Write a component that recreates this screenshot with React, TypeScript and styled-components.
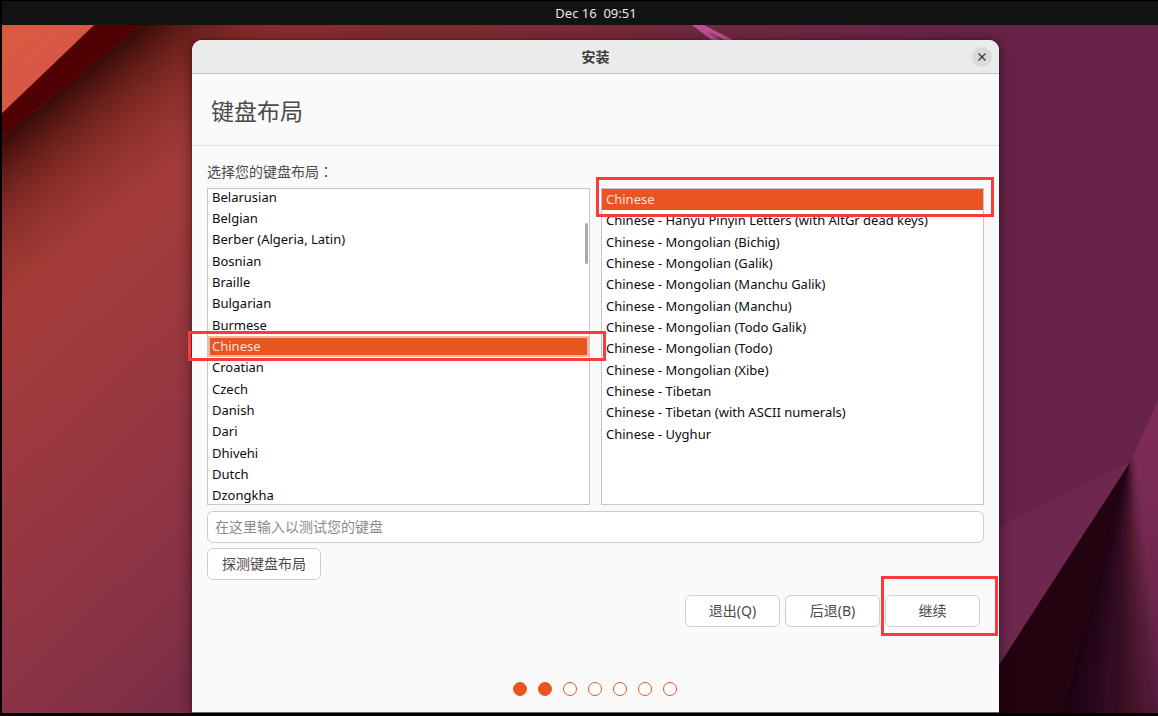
import React, { useState } from "react";
import styled, { createGlobalStyle, css } from "styled-components";

const ACCENT = "#e95420";

const GlobalStyle = createGlobalStyle`
  *, *::before, *::after { box-sizing: border-box; }
  body {
    margin: 0;
    background: #000;
    color: #4a4a4a;
    font: 14px/21px "Noto Sans", "Noto Sans CJK SC", sans-serif;
  }
  button, input { font: inherit; color: inherit; }
`;

const Screen = styled.div`
  display: flex;
  flex-direction: column;
  min-height: 100vh;
  padding: 0 0 3px 2px;
`;

const TopBar = styled.header`
  flex: none;
  display: flex;
  justify-content: center;
  height: 25px;
  padding-left: 32px;
  border-top: 1px solid #000;
  background: #131313;
  color: #e6e6e6;
  font-size: 13px;
  line-height: 24px;
  white-space: pre;
`;

const Desktop = styled.main`
  position: relative;
  flex: 1;
  display: flex;
  overflow: hidden;
  padding: 15px 159px 0 190px;
`;

const WallpaperArt = styled.svg`
  position: absolute;
  inset: 0;
  width: 100%;
  height: 100%;
`;

const Window = styled.section`
  position: relative;
  flex: 1;
  min-width: 0;
  display: flex;
  flex-direction: column;
  border-bottom: 1px solid #666;
  border-radius: 10px 10px 0 0;
  background: #fafafa;
  box-shadow: 0 2px 14px rgba(0, 0, 0, 0.5), 0 0 2px rgba(0, 0, 0, 0.4);
`;

const TitleBar = styled.div`
  display: grid;
  grid-template-columns: 1fr auto 1fr;
  align-items: center;
  height: 34px;
  padding: 0 7px;
  border-bottom: 1px solid #c4c4c4;
  border-radius: 10px 10px 0 0;
  background: #ebebeb;
`;

const WindowTitle = styled.h1`
  grid-column: 2;
  margin: 0;
  color: #3d3d3d;
  font-size: 14px;
  font-weight: 700;
`;

const CloseButton = styled.button`
  justify-self: end;
  display: grid;
  place-items: center;
  width: 20px;
  height: 20px;
  padding: 0;
  border: 0;
  border-radius: 50%;
  background: #dadada;
`;

const PageHeading = styled.h2`
  margin: 0;
  padding: 21px 19px 18px;
  border-bottom: 1px solid #e3e3e3;
  font-size: 23px;
  font-weight: 400;
  line-height: 32px;
`;

const Content = styled.div`
  display: flex;
  flex-direction: column;
  gap: 6px;
  padding: 15px 15px 0;
`;

const Prompt = styled.p`
  margin: 0;
  font-family: "Noto Sans CJK TC", sans-serif;
`;

const Lists = styled.div`
  display: grid;
  grid-template-columns: 1fr 1fr;
  gap: 11px;
`;

const ListFrame = styled.div`
  position: relative;
`;

const ListBox = styled.ul<{ $scrolled?: boolean }>`
  display: flex;
  flex-direction: column;
  justify-content: ${(p) => (p.$scrolled ? "center" : "flex-start")};
  height: 317px;
  margin: 0;
  padding: 0;
  overflow: hidden;
  border: 1px solid #c6c6c6;
  background: #fff;
  color: #0c0c0c;
  list-style: none;
`;

const Rows = styled.div<{ $height: number }>`
  flex: none;
  display: grid;
  grid-auto-rows: 1fr;
  height: ${(p) => p.$height}px;
`;

const Row = styled.li<{ $focused?: boolean }>`
  display: flex;
  align-items: center;
  padding: 0 4px;
  font-size: 13px;
  white-space: nowrap;
  cursor: default;

  &[aria-selected="true"] {
    background: ${ACCENT};
    color: #fbe0d6;
  }

  ${(p) =>
    p.$focused &&
    css`
      box-shadow: inset 0 0 0 2px #f4b8a1;
    `}
`;

const ScrollThumb = styled.span`
  position: absolute;
  top: 35px;
  right: 2px;
  width: 3px;
  height: 41px;
  border-radius: 2px;
  background: #aaa;
`;

const Highlight = styled.span<{ $inset: string; $height?: number }>`
  position: absolute;
  z-index: 1;
  inset: ${(p) => p.$inset};
  height: ${(p) => (p.$height ? `${p.$height}px` : "auto")};
  border: 3px solid #fb3a3a;
  pointer-events: none;
`;

const TestInput = styled.input`
  width: 100%;
  height: 32px;
  padding: 0 7px 2px;
  border: 1px solid #cbcbcb;
  border-radius: 6px;
  background: #fff;

  &::placeholder { color: #8b8b8b; opacity: 1; }
`;

const Button = styled.button`
  height: 32px;
  min-width: 95px;
  padding: 0 14px 2px;
  border: 1px solid #cfcfcf;
  border-radius: 6px;
  background: #fff;
`;

const DetectButton = styled(Button)`
  align-self: flex-start;
`;

const Fields = styled.div`
  display: flex;
  flex-direction: column;
  gap: 5px;
`;

const Actions = styled.div`
  display: flex;
  justify-content: flex-end;
  gap: 5px;
  padding: 15px 19px 0;
`;

const ActionSlot = styled.div`
  position: relative;
`;

const Steps = styled.ol`
  display: flex;
  justify-content: center;
  gap: 11px;
  margin: 0;
  padding: 55px 2px 16px 0;
  list-style: none;
`;

const Step = styled.li<{ $done: boolean }>`
  width: 14px;
  height: 14px;
  border: 1px solid ${ACCENT};
  border-radius: 50%;
  background: ${(p) => (p.$done ? ACCENT : "#fff")};
`;

const layouts = [
  "Belarusian", "Belgian", "Berber (Algeria, Latin)", "Bosnian", "Braille",
  "Bulgarian", "Burmese", "Chinese", "Croatian", "Czech", "Danish", "Dari",
  "Dhivehi", "Dutch", "Dzongkha",
];

const variants = [
  "Chinese",
  "Chinese - Hanyu Pinyin Letters (with AltGr dead keys)",
  "Chinese - Mongolian (Bichig)",
  "Chinese - Mongolian (Galik)",
  "Chinese - Mongolian (Manchu Galik)",
  "Chinese - Mongolian (Manchu)",
  "Chinese - Mongolian (Todo Galik)",
  "Chinese - Mongolian (Todo)",
  "Chinese - Mongolian (Xibe)",
  "Chinese - Tibetan",
  "Chinese - Tibetan (with ASCII numerals)",
  "Chinese - Uyghur",
];

// Fan of thin wedges that fades the ridge shadow out to the right.
const shadeSpread = [2, 6, 11, 16, 21, 26, 32, 38, 44, 51, 58, 66, 75, 85, 96, 108];

function Wallpaper() {
  return (
    <WallpaperArt viewBox="2 25 1156 688" preserveAspectRatio="none" aria-hidden="true">
      <defs>
        <linearGradient id="base" gradientUnits="userSpaceOnUse" x1="20" y1="230" x2="430" y2="670">
          <stop offset="0" stopColor="#a83e36" />
          <stop offset="0.3" stopColor="#9b383f" />
          <stop offset="0.6" stopColor="#883246" />
          <stop offset="1" stopColor="#652647" />
        </linearGradient>
        <linearGradient id="top" gradientUnits="userSpaceOnUse" x1="195" y1="0" x2="1000" y2="0">
          <stop offset="0" stopColor="#832b30" stopOpacity="0" />
          <stop offset="0.2" stopColor="#832b30" />
          <stop offset="0.43" stopColor="#7d2b35" />
          <stop offset="0.7" stopColor="#702743" />
          <stop offset="1" stopColor="#672348" />
        </linearGradient>
        <linearGradient id="fold" gradientUnits="userSpaceOnUse" x1="72" y1="81" x2="157" y2="187">
          <stop offset="0" stopColor="#380b08" />
          <stop offset="0.2" stopColor="#4d130f" stopOpacity="0.8" />
          <stop offset="0.5" stopColor="#6a1c1a" stopOpacity="0.5" />
          <stop offset="1" stopColor="#7c2626" stopOpacity="0" />
        </linearGradient>
        <linearGradient id="corner" x1="0" y1="0" x2="1" y2="1">
          <stop offset="0" stopColor="#db5b41" />
          <stop offset="1" stopColor="#d15449" />
        </linearGradient>
        <linearGradient id="facet" gradientUnits="userSpaceOnUse" x1="1150" y1="420" x2="1150" y2="713">
          <stop offset="0" stopColor="#7d2c58" />
          <stop offset="0.35" stopColor="#762951" />
          <stop offset="1" stopColor="#5c1e42" />
        </linearGradient>
        <clipPath id="facetClip">
          <path d="M1131 461 1158 400V713H1061Z" />
        </clipPath>
        <filter id="soft" x="-20%" y="-20%" width="140%" height="140%">
          <feGaussianBlur stdDeviation="3" />
        </filter>
      </defs>
      <rect x="2" y="25" width="600" height="688" fill="url(#base)" />
      <rect x="600" y="25" width="558" height="688" fill="#672348" />
      <rect x="195" y="25" width="963" height="90" fill="url(#top)" />
      <path d="M141 25H440L2 376V137Z" fill="url(#fold)" />
      <path d="M94 25H141L2 137V113Z" fill="#500002" />
      <path d="M2 25H94L2 113Z" fill="url(#corner)" />
      <path d="M692 25H704L735 41H726L706 31 722 41H713Z" fill="#bb5390" />
      <path d="M990 532 1131 461 990 680Z" fill="#6e274e" />
      <path d="M1131 461 1064 713H968Z" fill="#240311" />
      <path d="M1131 461 1158 400V713H1061Z" fill="url(#facet)" />
      <g clipPath="url(#facetClip)">
        <g filter="url(#soft)">
          {shadeSpread.map((spread) => (
            <path
              key={spread}
              d={`M1131 458 1000 740H${1055 + spread}Z`}
              fill="#1c0210"
              fillOpacity="0.15"
            />
          ))}
        </g>
        <path d="M1131 461 1066 713H1055Z" fill="#1c0210" fillOpacity="0.6" />
      </g>
    </WallpaperArt>
  );
}

interface OptionListProps {
  label: string;
  items: string[];
  height: number;
  scrolled?: boolean;
}

function OptionList({ label, items, height, scrolled }: OptionListProps) {
  const [selected, setSelected] = useState("Chinese");
  return (
    <ListBox role="listbox" aria-label={label} tabIndex={0} $scrolled={scrolled}>
      <Rows role="presentation" $height={height}>
        {items.map((item) => (
          <Row
            key={item}
            role="option"
            aria-selected={item === selected}
            $focused={scrolled && item === selected}
            onClick={() => setSelected(item)}
          >
            {item}
          </Row>
        ))}
      </Rows>
    </ListBox>
  );
}

export default function App() {
  return (
    <Screen lang="zh-CN">
      <GlobalStyle />
      <TopBar>{"Dec 16  09:51"}</TopBar>
      <Desktop>
        <Wallpaper />
        <Window>
          <TitleBar>
            <WindowTitle>安装</WindowTitle>
            <CloseButton aria-label="关闭">
              <svg width="8" height="8" viewBox="0 0 8 8" stroke="#3d3d3d" strokeWidth="1.3">
                <path d="M0.5 0.5 7.5 7.5M7.5 0.5 0.5 7.5" />
              </svg>
            </CloseButton>
          </TitleBar>
          <PageHeading>键盘布局</PageHeading>
          <Content>
            <Prompt lang="zh-TW">选择您的键盘布局：</Prompt>
            <Lists>
              <ListFrame>
                <OptionList label="键盘布局" items={layouts} height={320} scrolled />
                <ScrollThumb />
                <Highlight $inset="143px -16px auto -19px" $height={30} />
              </ListFrame>
              <ListFrame>
                <OptionList label="键盘布局变体" items={variants} height={256} />
                <Highlight $inset="-11px -10px auto -5px" $height={40} />
              </ListFrame>
            </Lists>
            <Fields>
              <TestInput aria-label="测试键盘" placeholder="在这里输入以测试您的键盘" />
              <DetectButton>探测键盘布局</DetectButton>
            </Fields>
          </Content>
          <Actions>
            <Button>退出(Q)</Button>
            <Button>后退(B)</Button>
            <ActionSlot>
              <Button>继续</Button>
              <Highlight $inset="-19px -18px -9px -4px" />
            </ActionSlot>
          </Actions>
          <Steps aria-label="安装进度">
            {[1, 2, 3, 4, 5, 6, 7].map((n) => (
              <Step key={n} $done={n <= 2} />
            ))}
          </Steps>
        </Window>
      </Desktop>
    </Screen>
  );
}
